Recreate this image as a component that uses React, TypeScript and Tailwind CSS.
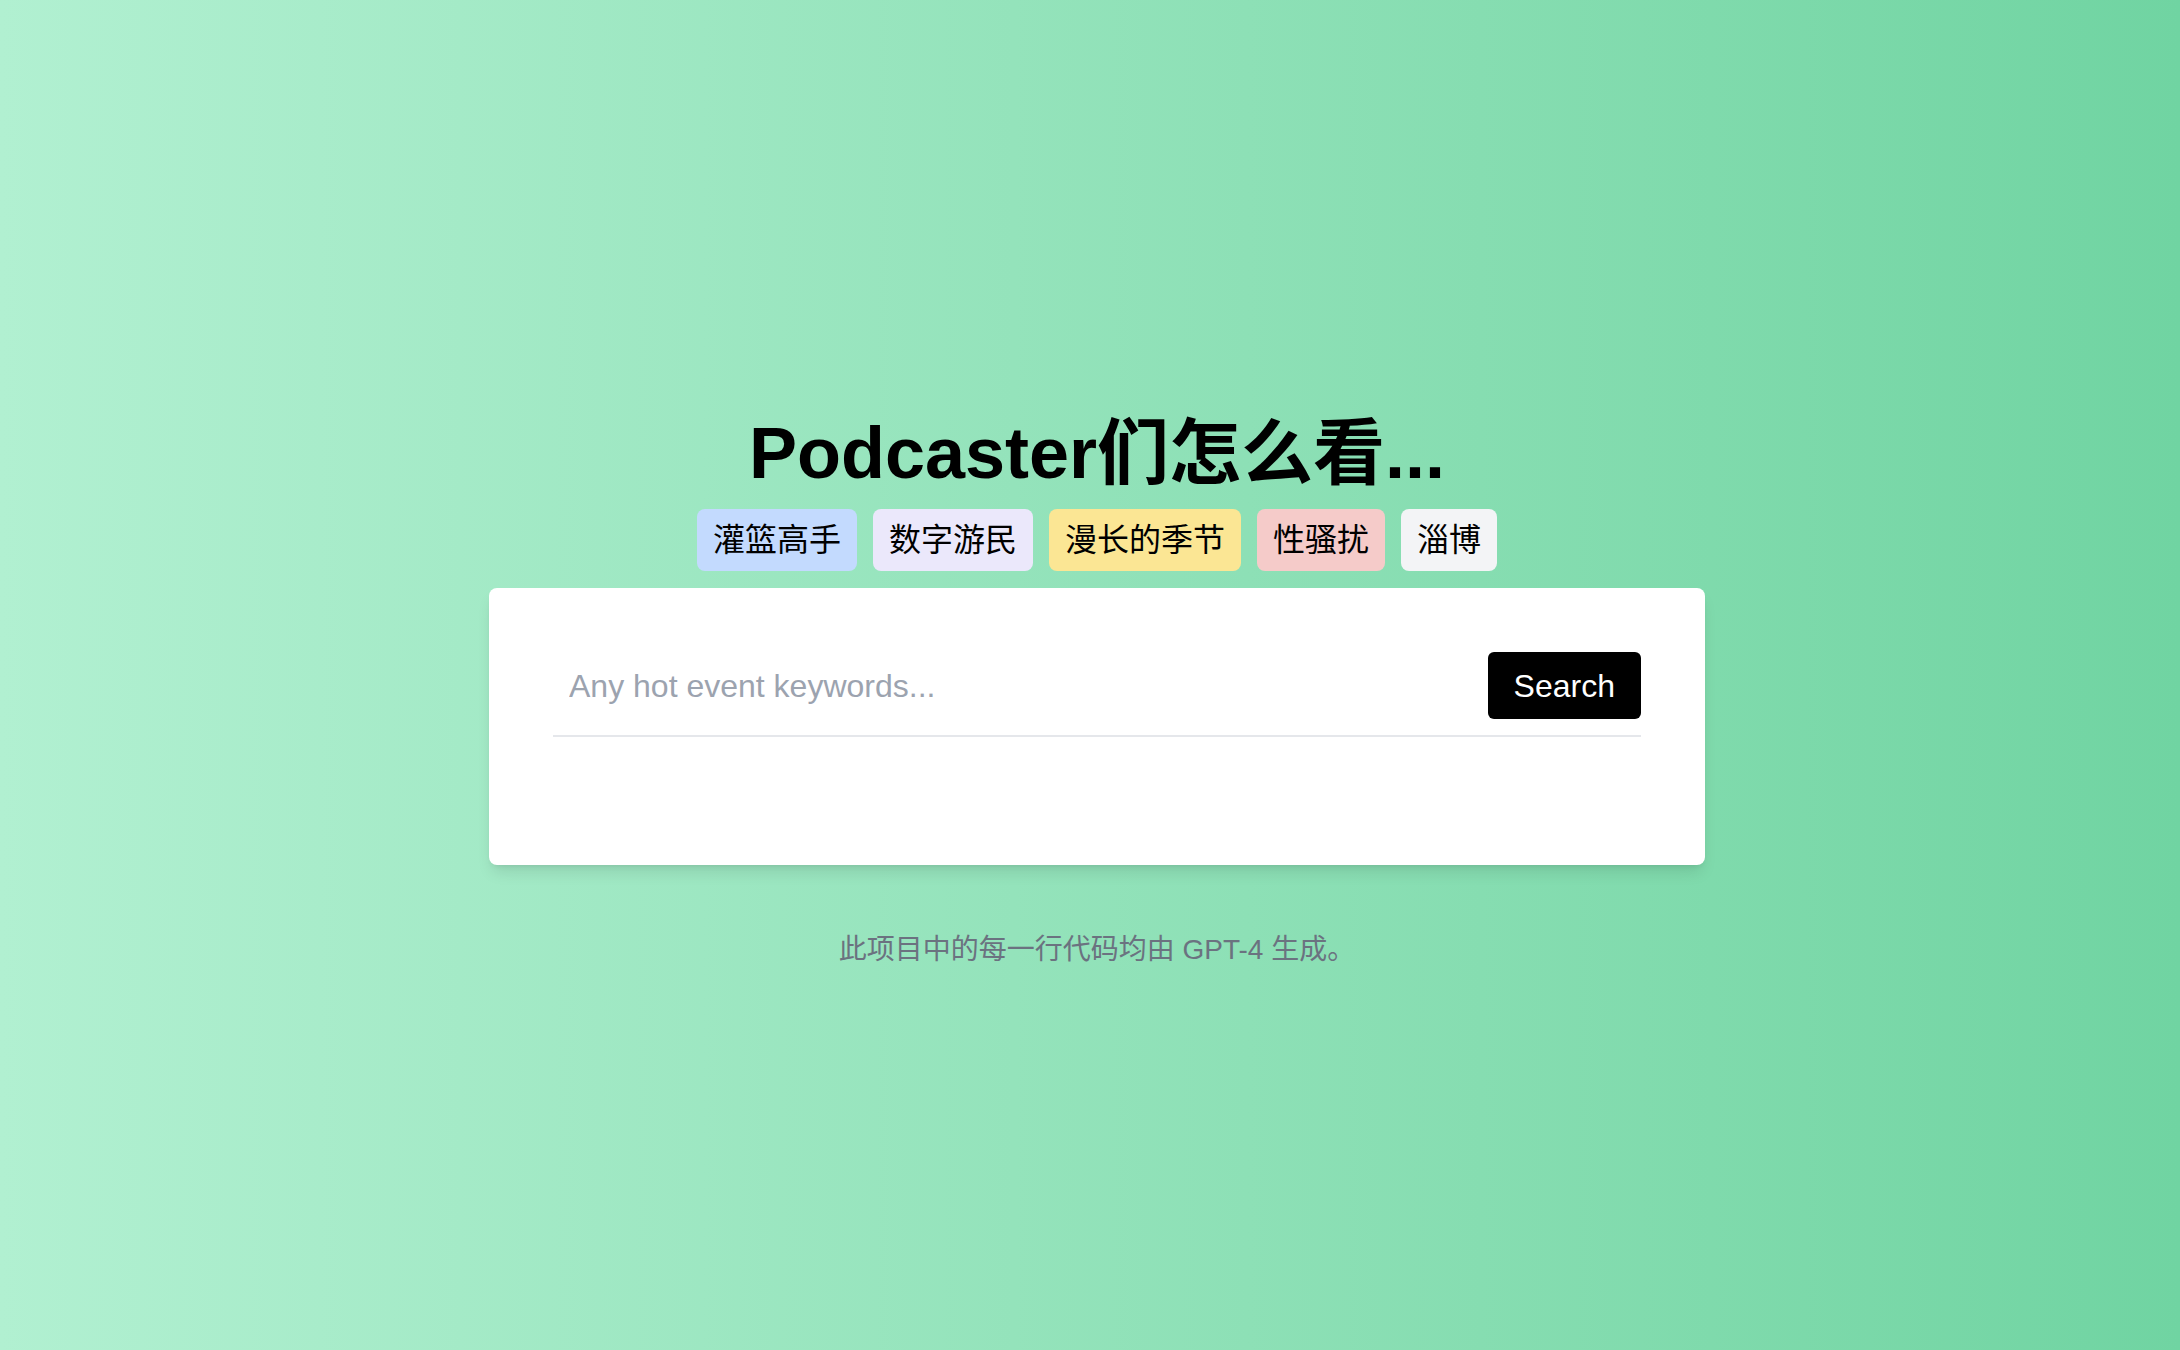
import { useState } from "react"

const tags = [
  { name: "灌篮高手", color: "bg-[#c3dafe]" },
  { name: "数字游民", color: "bg-[#ebe8fb]" },
  { name: "漫长的季节", color: "bg-[#fbe694]" },
  { name: "性骚扰", color: "bg-[#f5cbc9]" },
  { name: "淄博", color: "bg-[#f3f4f6]" },
]

const font = { fontFamily: '"Liberation Sans", "Noto Sans CJK SC", sans-serif' }

export default function App() {
  const [query, setQuery] = useState("")

  return (
    <div
      className="min-h-screen w-full bg-gradient-to-r from-[#b1f0d1] to-[#70d4a2] flex flex-col items-center pt-[417px] pl-[14px]"
      style={font}
    >
      {/* Title */}
      <h1 className="text-[72px] leading-[72px] font-bold text-black">Podcaster们怎么看...</h1>

      {/* Tag row */}
      <div className="mt-5 flex gap-4">
        {tags.map((tag) => (
          <button
            key={tag.name}
            onClick={() => setQuery(tag.name)}
            className={`h-[62px] px-4 rounded-lg flex items-center text-[32px] text-black ${tag.color}`}
          >
            {tag.name}
          </button>
        ))}
      </div>

      {/* Search card */}
      <div className="mt-[17px] w-[1216px] bg-white rounded-lg shadow-lg p-16">
        <div className="flex items-center border-b-2 border-[#e5e7eb] pb-4">
          <input
            value={query}
            onChange={(e) => setQuery(e.target.value)}
            placeholder="Any hot event keywords..."
            className="flex-1 px-4 text-[32px] text-black placeholder-[#9ca3af] outline-none bg-transparent"
            style={font}
          />
          <button className="h-[67px] px-[26px] bg-black text-white rounded-md text-[32px]">Search</button>
        </div>
        <div className="h-16" />
      </div>

      <p className="mt-[69px] text-[28px] leading-8 text-[#6b7280]">此项目中的每一行代码均由 GPT-4 生成。</p>
    </div>
  )
}
